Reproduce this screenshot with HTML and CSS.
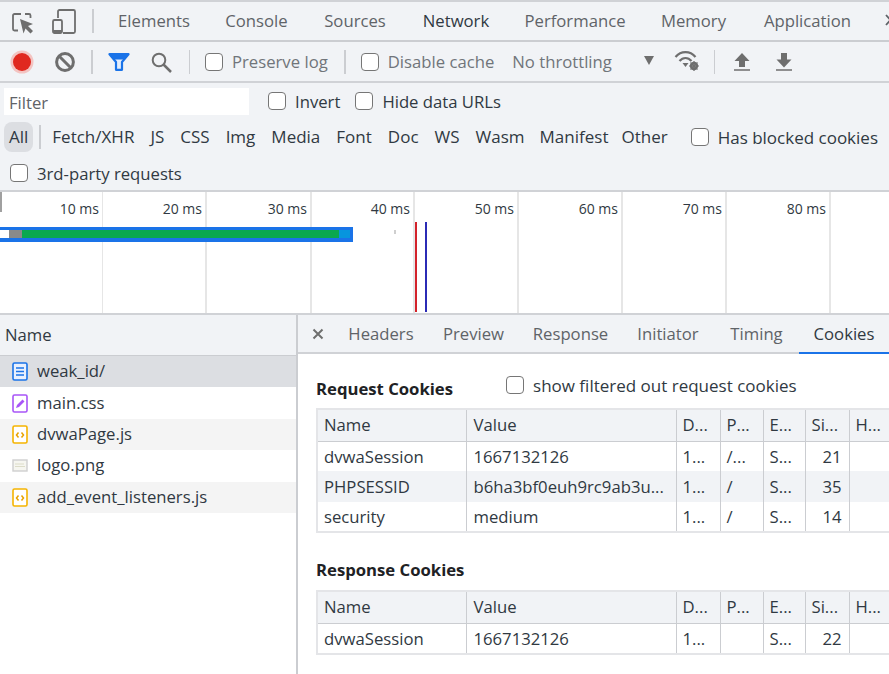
FILE: index.html
```html
<!DOCTYPE html>
<html lang="en">
<head>
<meta charset="utf-8">
<title>Network</title>
<link rel="stylesheet" href="styles.css">
</head>
<body>
<div class="devtools">
  <header class="tabbar">
    <button class="ico ico-inspect"><svg width="24" height="24" viewBox="0 0 24 24"><path d="M11 4H4.500A1.500 1.500 0 0 0 3 5.500V19a1.500 1.500 0 0 0 1.500 1.500H8" fill="none" stroke="#6e6e6e" stroke-width="1.800"/><path d="M15 4h4a1.500 1.500 0 0 1 1.500 1.500V8" fill="none" stroke="#6e6e6e" stroke-width="1.800"/><path d="M10 9l13 5-5 2 5 5-2.500 2.500-5-5-2 5z" fill="#6e6e6e"/></svg></button>
    <button class="ico ico-device"><svg width="24" height="26" viewBox="0 0 24 26"><path d="M6 9V2.500A1.500 1.500 0 0 1 7.500 1h14A1.500 1.500 0 0 1 23 2.500v20a1.500 1.500 0 0 1-1.500 1.500H11" fill="none" stroke="#6e6e6e" stroke-width="1.800"/><rect x="1" y="11" width="9" height="13" rx="1.500" fill="none" stroke="#6e6e6e" stroke-width="1.800"/><rect x="1" y="21" width="9" height="3" fill="#6e6e6e"/></svg></button>
    <span class="sep sep-tall"></span>
    <nav class="tabs">
      <a class="tab t-elements">Elements</a>
      <a class="tab t-console">Console</a>
      <a class="tab t-sources">Sources</a>
      <a class="tab t-network active">Network</a>
      <a class="tab t-perf">Performance</a>
      <a class="tab t-memory">Memory</a>
      <a class="tab t-app">Application</a>
    </nav>
    <svg class="more" width="14" height="14" viewBox="0 0 14 14"><path d="M1 1l4.500 5L1 11M6 1l4.500 5L6 11" fill="none" stroke="#5f6368" stroke-width="1.800"/></svg>
  </header>

  <div class="toolbar">
    <span class="record"></span>
    <svg class="tool-clear" width="20" height="20" viewBox="0 0 20 20"><circle cx="10" cy="10" r="8.400" fill="none" stroke="#6e6e6e" stroke-width="3"/><path d="M4 4l12 12" stroke="#6e6e6e" stroke-width="3"/></svg>
    <span class="sep sep-a"></span>
    <svg class="tool-filter" width="22" height="18" viewBox="0 0 22 18"><path d="M1.500 1.200h19L14 9v7.800H8V9z" fill="#e3edfc" stroke="#1a73e8" stroke-width="2.200" stroke-linejoin="round"/><path d="M1.500 1h19l-4.500 5.500H6z" fill="#1a73e8"/></svg>
    <svg class="tool-search" width="21" height="21" viewBox="0 0 21 21"><circle cx="8" cy="8" r="6.300" fill="none" stroke="#6e6e6e" stroke-width="2"/><path d="M12.500 12.500l7.500 7.500" stroke="#6e6e6e" stroke-width="2.500"/></svg>
    <span class="sep sep-b"></span>
    <label class="check muted c-preserve"><input type="checkbox"><span>Preserve log</span></label>
    <span class="sep sep-c"></span>
    <label class="check muted c-cache"><input type="checkbox"><span>Disable cache</span></label>
    <span class="throttle muted">No throttling</span>
    <span class="caret"></span>
    <svg class="tool-wifi" width="26" height="21" viewBox="0 0 26 21"><path d="M1.500 6C7-.500 16-.500 21.500 6M5.500 10c3.500-4 8.500-4 12 0" fill="none" stroke="#6e6e6e" stroke-width="2.200"/><path d="M8.500 12h6L11.500 16z" fill="#6e6e6e"/><circle cx="20" cy="15" r="3" fill="none" stroke="#6e6e6e" stroke-width="2.400"/><path d="M20 10v10M15 15h10M16.500 11.500l7 7M23.500 11.500l-7 7" stroke="#6e6e6e" stroke-width="1.200"/></svg>
    <span class="sep sep-d"></span>
    <svg class="tool-up" width="16" height="18" viewBox="0 0 16 18"><path d="M8 0l7.500 8H11v6H5V8H.5z" fill="#6e6e6e"/><path d="M0 17h16" stroke="#6e6e6e" stroke-width="1.500"/></svg>
    <svg class="tool-down" width="16" height="18" viewBox="0 0 16 18"><path d="M8 14.500l7.500-8H11V0H5v6.500H.5z" fill="#6e6e6e"/><path d="M0 17h16" stroke="#6e6e6e" stroke-width="1.500"/></svg>
  </div>

  <section class="filters">
    <div class="frow frow-1">
      <div class="filter-input">Filter</div>
      <label class="check c-invert"><input type="checkbox"><span>Invert</span></label>
      <label class="check c-hide"><input type="checkbox"><span>Hide data URLs</span></label>
    </div>
    <div class="frow frow-2">
      <span class="chip selected">All</span>
      <span class="sep sep-chip"></span>
      <span class="chip">Fetch/XHR</span>
      <span class="chip">JS</span>
      <span class="chip">CSS</span>
      <span class="chip">Img</span>
      <span class="chip">Media</span>
      <span class="chip">Font</span>
      <span class="chip">Doc</span>
      <span class="chip">WS</span>
      <span class="chip">Wasm</span>
      <span class="chip chip-manifest">Manifest</span>
      <span class="chip">Other</span>
      <label class="check c-blocked"><input type="checkbox"><span>Has blocked cookies</span></label>
    </div>
    <div class="frow frow-3">
      <label class="check c-third"><input type="checkbox"><span>3rd-party requests</span></label>
    </div>
  </section>

  <section class="timeline">
    <div class="ticks">
      <div class="tick first">10 ms</div>
      <div class="tick">20 ms</div>
      <div class="tick wide">30 ms</div>
      <div class="tick narrow">40 ms</div>
      <div class="tick">50 ms</div>
      <div class="tick">60 ms</div>
      <div class="tick">70 ms</div>
      <div class="tick">80 ms</div>
    </div>
    <span class="start-mark"></span>
    <div class="bar">
      <span class="bar-white"></span><span class="bar-grey"></span><span class="bar-green"></span><span class="bar-cyan"></span>
    </div>
    <span class="speck"></span>
    <span class="line-red"></span>
    <span class="line-blue"></span>
  </section>

  <main class="split">
    <aside class="requests">
      <div class="req-head">Name</div>
      <div class="req selected"><svg class="fi" width="16" height="19" viewBox="0 0 16 19"><rect x="1" y="1" width="14" height="17" rx="1.500" fill="#e8f0fe" stroke="#1a73e8" stroke-width="1.600"/><path d="M4 6h8M4 9.500h8M4 13h8" stroke="#1a73e8" stroke-width="1.400"/></svg><span>weak_id/</span></div>
      <div class="req"><svg class="fi" width="16" height="19" viewBox="0 0 16 19"><rect x="1" y="1" width="14" height="17" rx="1.500" fill="#fff" stroke="#a855f7" stroke-width="1.600"/><path d="M4 14l1-3 5.500-5.500 2 2L7 13z" fill="#a855f7"/></svg><span>main.css</span></div>
      <div class="req alt"><svg class="fi" width="16" height="19" viewBox="0 0 16 19"><rect x="1" y="1" width="14" height="17" rx="1.500" fill="#fff" stroke="#f5b400" stroke-width="1.600"/><path d="M6.500 7.500L4.500 10l2 2.500M9.500 7.500l2 2.500-2 2.500" fill="none" stroke="#e8a200" stroke-width="1.500"/></svg><span>dvwaPage.js</span></div>
      <div class="req"><svg class="fi" width="16" height="19" viewBox="0 0 16 19"><rect x="1" y="4" width="14" height="11" fill="#f6f6f0" stroke="#cfcfcf" stroke-width="1.400"/><path d="M3 8h9M3 10.500h10" stroke="#dcdcc8" stroke-width="1.200"/></svg><span>logo.png</span></div>
      <div class="req alt"><svg class="fi" width="16" height="19" viewBox="0 0 16 19"><rect x="1" y="1" width="14" height="17" rx="1.500" fill="#fff" stroke="#f5b400" stroke-width="1.600"/><path d="M6.500 7.500L4.500 10l2 2.500M9.500 7.500l2 2.500-2 2.500" fill="none" stroke="#e8a200" stroke-width="1.500"/></svg><span>add_event_listeners.js</span></div>
    </aside>
    <section class="detail">
      <div class="detail-tabs">
        <svg class="close" width="12" height="12" viewBox="0 0 12 12"><path d="M1.500 1.500l9 9M10.500 1.500l-9 9" stroke="#6e6e6e" stroke-width="2"/></svg>
        <a class="dtab d-headers">Headers</a>
        <a class="dtab d-preview">Preview</a>
        <a class="dtab d-response">Response</a>
        <a class="dtab d-initiator">Initiator</a>
        <a class="dtab d-timing">Timing</a>
        <a class="dtab d-cookies">Cookies</a>
      </div>
      <div class="cookies">
        <div class="ctitle-row">
          <h2 class="ctitle">Request Cookies</h2>
          <label class="check c-show"><input type="checkbox"><span>show filtered out request cookies</span></label>
        </div>
        <table class="ctable">
          <colgroup><col class="w-name"><col class="w-value"><col class="w-d"><col class="w-p"><col class="w-e"><col class="w-s"><col class="w-h"></colgroup>
          <thead><tr><th>Name</th><th>Value</th><th>D...</th><th>P...</th><th>E...</th><th>Si...</th><th>H...</th></tr></thead>
          <tbody>
            <tr><td>dvwaSession</td><td>1667132126</td><td>1...</td><td>/...</td><td>S...</td><td class="num">21</td><td></td></tr>
            <tr class="alt"><td>PHPSESSID</td><td>b6ha3bf0euh9rc9ab3u...</td><td>1...</td><td>/</td><td>S...</td><td class="num">35</td><td></td></tr>
            <tr><td>security</td><td>medium</td><td>1...</td><td>/</td><td>S...</td><td class="num">14</td><td></td></tr>
          </tbody>
        </table>
        <h2 class="ctitle resp">Response Cookies</h2>
        <table class="ctable">
          <colgroup><col class="w-name"><col class="w-value"><col class="w-d"><col class="w-p"><col class="w-e"><col class="w-s"><col class="w-h"></colgroup>
          <thead><tr><th>Name</th><th>Value</th><th>D...</th><th>P...</th><th>E...</th><th>Si...</th><th>H...</th></tr></thead>
          <tbody>
            <tr><td>dvwaSession</td><td>1667132126</td><td>1...</td><td></td><td>S...</td><td class="num">22</td><td></td></tr>
          </tbody>
        </table>
      </div>
    </section>
  </main>
</div>
</body>
</html>
```
FILE: styles.css
```css
* { box-sizing: border-box; }
html, body { margin: 0; padding: 0; }
body {
  width: 889px; height: 674px; overflow: hidden; background: #fff;
  font-family: "Open Sans", "Noto Sans", "Liberation Sans", sans-serif;
  font-size: 16.700px; color: #303942;
}
.devtools { width: 889px; height: 674px; display: flex; flex-direction: column; overflow: hidden; }
button { border: 0; background: none; padding: 0; display: block; }
svg { display: block; flex: none; }

.tabbar {
  height: 42px; flex: none; display: flex; align-items: center;
  background: #f1f3f6; border-top: 2px solid #d0d2d6; border-bottom: 2px solid #cbcdd1;
  padding-left: 10px; overflow: hidden;
}
.ico-inspect { margin-top: 2px; }
.ico-device { margin-left: 18px; margin-top: 2px; }
.sep { display: block; width: 2px; background: #cbcdd1; flex: none; }
.sep-tall { height: 24px; margin-left: 16px; }
.tabs { display: flex; height: 100%; margin-left: 7px; }
.tab { display: flex; align-items: center; justify-content: center; color: #5f6368; height: 40px; margin-bottom: -2px; padding-bottom: 3px; white-space: nowrap; flex: none; }
.t-elements { width: 106px; }
.t-console { width: 99px; }
.t-sources { width: 98px; }
.t-network { width: 104px; color: #303942; }
.t-perf { width: 134px; }
.t-memory { width: 103px; }
.t-app { width: 125px; }
.tab.active { box-shadow: inset 0 -2px 0 #1a73e8; }
.more { margin-left: 15px; }

.toolbar {
  height: 41px; flex: none; display: flex; align-items: center;
  background: #f1f3f6; border-bottom: 2px solid #d0d2d6; padding-left: 13px;
  color: #5f6368;
}
.record { width: 18px; height: 18px; border-radius: 50%; background: #e0281f; box-shadow: 0 0 0 2.500px #f3c4c2; }
.tool-clear { margin-left: 24px; }
.sep-a { height: 24px; margin-left: 16px; }
.tool-filter { margin-left: 15px; margin-top: 1px; }
.tool-search { margin-left: 21px; margin-top: 1px; }
.sep-b { height: 24px; width: 1px; margin-left: 17px; }
.check { display: inline-flex; align-items: center; white-space: nowrap; }
.check input { appearance: none; -webkit-appearance: none; margin: 0; width: 18px; height: 18px; border: 1.500px solid #767676; border-radius: 4px; background: #fff; flex: none; }
.check span { margin-left: 9px; }
.muted { color: #70757a; }
.c-preserve { margin-left: 15px; }
.sep-c { height: 24px; margin-left: 16px; }
.c-cache { margin-left: 15px; }
.throttle { margin-left: 18px; }
.caret { width: 0; height: 0; border-left: 5.500px solid transparent; border-right: 5.500px solid transparent; border-top: 9px solid #6e6e6e; margin-left: 32px; margin-top: -2px; }
.tool-wifi { margin-left: 20px; margin-top: -1px; }
.sep-d { height: 24px; width: 1px; margin-left: 14px; }
.tool-up { margin-left: 19px; }
.tool-down { margin-left: 26px; }

.filters { height: 109px; flex: none; background: #f1f3f6; border-bottom: 2px solid #d0d2d6; color: #303942; }
.frow { display: flex; align-items: center; }
.frow-1 { height: 28px; margin-top: 4px; padding-left: 4px; }
.filter-input { width: 245px; height: 27px; background: #fff; color: #5f6368; padding-left: 5px; line-height: 30px; }
.c-invert { margin-left: 19px; }
.c-hide { margin-left: 15px; }
.frow-2 { height: 30px; margin-top: 7px; padding-left: 4px; font-size: 17px; }
.chip { padding: 0 3px; margin-right: 10px; height: 30px; line-height: 30px; white-space: nowrap; }
.chip.selected { background: #dcdee2; border-radius: 8px; margin-right: 6px; padding: 0 5px; }
.chip.chip-manifest { margin-right: 7px; margin-left: -1px; }
.sep-chip { height: 24px; margin-right: 8px; }
.c-blocked { margin-left: 10px; }
.frow-3 { height: 28px; margin-top: 7px; padding-left: 10px; }

.timeline { height: 123px; flex: none; position: relative; background: #fff; border-bottom: 2px solid #d0d2d6; }
.ticks { display: flex; height: 100%; }
.tick { flex: none; width: 104px; border-right: 2px solid #e6e6e6; text-align: right; padding: 8px 3px 0 0; line-height: 18px; font-size: 14px; color: #303942; }
.tick.first { width: 103px; border-right-width: 1px; }
.tick.wide { width: 105px; }
.tick.narrow { width: 103px; }
.start-mark { position: absolute; left: 0; top: 0; width: 2px; height: 20px; background: #a0a0a0; }
.bar { position: absolute; left: 0; top: 35px; width: 353px; height: 15px; background: #1a73e8; padding: 3px 3px 4px 0; display: flex; }
.bar-white { width: 9px; background: #fff; }
.bar-grey { width: 13px; background: #8a8a8a; }
.bar-green { width: 317px; background: #0aa84f; }
.bar-cyan { width: 11px; background: #0795de; }
.speck { position: absolute; left: 394px; top: 38px; width: 2px; height: 4px; background: #cfcfcf; }
.line-red { position: absolute; left: 415px; top: 30px; width: 2px; height: 90px; background: #d3222a; }
.line-blue { position: absolute; left: 425px; top: 30px; width: 2px; height: 90px; background: #2b2bb5; }

.split { flex: 1; display: flex; min-height: 0; }
.requests { width: 296px; flex: none; background: #fff; }
.req-head { height: 41px; background: #f1f3f6; border-bottom: 1px solid #cbcdd1; display: flex; align-items: center; padding-left: 5px; padding-bottom: 2px; color: #303942; }
.req { height: 31.400px; display: flex; align-items: center; padding-left: 12px; color: #303942; }
.req span { margin-left: 9px; margin-top: -2px; }
.req.selected { background: #dcdee2; }
.req.alt { background: #f4f4f4; }

.detail { flex: 1; min-width: 0; border-left: 2px solid #cbcdd1; overflow: hidden; }
.detail-tabs { height: 39px; display: flex; align-items: center; background: #f1f3f6; border-bottom: 2px solid #d0d2d6; color: #5f6368; }
.close { margin-left: 14px; }
.dtab { height: 39px; display: flex; align-items: center; justify-content: center; flex: none; margin-bottom: -2px; padding-bottom: 2px; }
.d-headers { margin-left: 10px; width: 94px; }
.d-preview { width: 91px; }
.d-response { width: 103px; }
.d-initiator { width: 92px; }
.d-timing { width: 85px; }
.d-cookies { width: 90px; color: #303942; box-shadow: inset 0 -2px 0 #1a73e8; }

.cookies { width: 591px; padding: 0 0 0 18px; }
.ctitle-row { display: flex; align-items: center; height: 54px; padding-top: 16px; }
.ctitle { margin: 0; font-size: 16.700px; font-weight: 700; color: #202124; line-height: 20px; }
.c-show { margin-left: 53px; margin-top: -8px; color: #303942; font-size: 17px; }
.ctable { table-layout: fixed; width: 572px; border-collapse: collapse; border: 2px solid #e4e5e8; border-right: 0; }
.w-name { width: 149px; }
.w-value { width: 210px; }
.w-d { width: 44px; }
.w-p { width: 43px; }
.w-e { width: 42px; }
.w-s { width: 44px; }
.w-h { width: 40px; }
.ctable th, .ctable td { padding: 0 6px; text-align: left; font-weight: 400; white-space: nowrap; overflow: hidden; color: #303942; height: 30.400px; border-right: 1px solid #cbcdd1; }
.ctable th { background: #f1f3f6; height: 32px; border-bottom: 1px solid #cbcdd1; padding-bottom: 2px; }
.ctable th:nth-child(2), .ctable td:nth-child(2) { padding-left: 7px; }
.ctable tr.alt td { background: #f1f3f6; }
.ctable td.num { text-align: right; padding-right: 7px; }
.resp { margin-top: 27px; margin-bottom: 10px; }
```
